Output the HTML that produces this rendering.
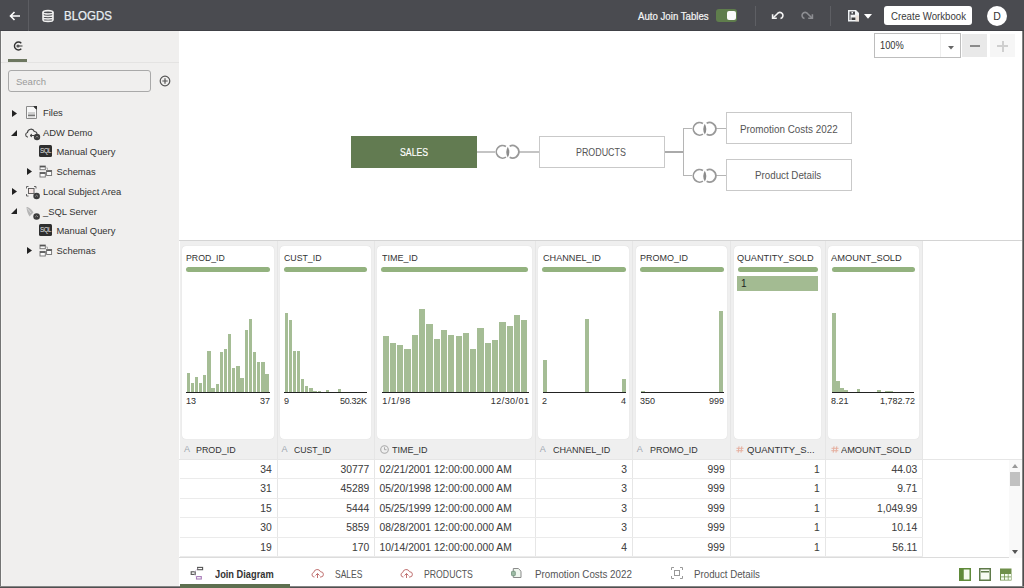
<!DOCTYPE html><html><head><meta charset="utf-8"><style>
*{margin:0;padding:0;box-sizing:border-box}
html,body{width:1024px;height:588px;overflow:hidden;background:#4a4b50;font-family:"Liberation Sans",sans-serif;color:#333}
.a{position:absolute}
.t{position:absolute;white-space:nowrap;line-height:10px}
.card{position:absolute;top:246px;height:193px;background:#fff;border-radius:4px;box-shadow:0 0 1px rgba(0,0,0,.15)}
.band{position:absolute;top:241px;height:218px;background:#efefef}
.ctitle{position:absolute;top:253px;letter-spacing:-0.2px;font-size:9.3px;color:#333;white-space:nowrap;line-height:10px}
.gbar{position:absolute;top:267px;height:5px;background:#93b27f;border-radius:3px}
.axis{position:absolute;top:392px;height:1px;background:#222}
.lab{position:absolute;top:396px;font-size:9px;color:#333;line-height:10px;white-space:nowrap}
.bar{position:absolute;background:#a5bd95}
.hdr{position:absolute;top:440px;height:19px;background:#efefef}
.hname{position:absolute;top:445px;font-size:9.3px;color:#333;line-height:10px;white-space:nowrap}
.row{position:absolute;height:1px;background:#ebebeb}
.vl{position:absolute;width:1px;background:#e4e4e4}
.cell{position:absolute;font-size:10.3px;color:#3c3c3c;line-height:10px;white-space:nowrap;text-align:right}
.tree{position:absolute;font-size:9.4px;color:#333;line-height:10px;white-space:nowrap}
.tab{position:absolute;top:570px;font-size:9.7px;color:#555;line-height:10px;white-space:nowrap}
.node{position:absolute;height:32px;border:1px solid #c9c9c9;background:#fff;font-size:9.6px;color:#444;text-align:center;line-height:32px;white-space:nowrap}
.ln{position:absolute;background:#b5b5b5}
svg{position:absolute;overflow:visible}
.cell,.ctitle,.hname,.lab{-webkit-text-stroke:0.05px currentColor}
</style></head><body>
<div class="a" style="left:0;top:0;width:1024px;height:31px;background:#4a4b50"></div>
<div class="a" style="left:0;top:30px;width:1024px;height:1px;background:#404146"></div>
<div class="a" style="left:1px;top:31px;width:178px;height:555px;background:#f0efee"></div>
<div class="a" style="left:0;top:31px;width:1px;height:557px;background:#747474"></div>
<div class="a" style="left:1px;top:31px;width:1px;height:555px;background:#f6f6f5"></div>
<div class="a" style="left:179px;top:31px;width:843px;height:209px;background:#fff"></div>
<div class="a" style="left:179px;top:240px;width:843px;height:1px;background:#d4d4d4"></div>
<div class="a" style="left:179px;top:241px;width:843px;height:317px;background:#fff"></div>
<div class="a" style="left:179px;top:558px;width:843px;height:28px;background:#fff"></div>
<div class="a" style="left:1022px;top:31px;width:1px;height:557px;background:#858585"></div>
<div class="a" style="left:1023px;top:31px;width:1px;height:557px;background:#4e4e4e"></div>
<div class="a" style="left:0;top:586px;width:1024px;height:1px;background:#868686"></div>
<div class="a" style="left:0;top:587px;width:1024px;height:1px;background:#505050"></div>
<div class="a" style="left:28px;top:0;width:1px;height:31px;background:#5c5d62"></div>
<svg style="left:9px;top:10px" width="12" height="12" viewBox="0 0 12 12"><path d="M1.5 6H11M5.5 2L1.5 6L5.5 10" stroke="#fff" stroke-width="1.6" fill="none"/></svg>
<svg style="left:42px;top:10px" width="12" height="12" viewBox="0 0 12 12"><g stroke="#f0f0f0" stroke-width="1.6" fill="none"><ellipse cx="6" cy="2.3" rx="5" ry="1.7"/><path d="M1 2.3V9.7C1 10.7 3.2 11.4 6 11.4S11 10.7 11 9.7V2.3M1 4.8C1 5.8 3.2 6.5 6 6.5S11 5.8 11 4.8M1 7.3C1 8.3 3.2 9 6 9S11 8.3 11 7.3"/></g></svg>
<div class="t" style="left:64px;top:10.2px;font-size:12.2px;line-height:12px;color:#e8eef3;transform:scaleX(0.945);transform-origin:0 0;-webkit-text-stroke:0.25px #e8eef3">BLOGDS</div>
<div class="t" style="left:638.30px;top:10.72px;font-size:10.61px;line-height:10.61px;color:#f6f6f6;transform:scaleX(0.910);transform-origin:0 0;-webkit-text-stroke:0.2px #f6f6f6">Auto Join Tables</div>
<div class="a" style="left:715.5px;top:9px;width:21.5px;height:12.5px;border-radius:3px;background:#5f7d4c"></div>
<div class="a" style="left:726.5px;top:10.5px;width:9.5px;height:9.5px;border-radius:2px;background:#fafafa"></div>
<div class="a" style="left:755px;top:6px;width:1px;height:20px;background:#5e5f64"></div>
<svg style="left:770px;top:10px" width="14" height="12" viewBox="0 0 14 12"><g stroke="#f4f4f4" stroke-width="1.6" fill="none"><path d="M2.6 4.3V8.3H6.8"/><path d="M3 8L7.3 3.7A3.1 3.1 0 1 1 10.5 8.5"/></g></svg>
<svg style="left:801px;top:10px;transform:scaleX(-1)" width="14" height="12" viewBox="0 0 14 12"><g stroke="#8d8e92" stroke-width="1.6" fill="none"><path d="M2.6 4.3V8.3H6.8"/><path d="M3 8L7.3 3.7A3.1 3.1 0 1 1 10.5 8.5"/></g></svg>
<div class="a" style="left:830px;top:6px;width:1px;height:20px;background:#5e5f64"></div>
<svg style="left:848px;top:9.5px" width="11" height="12" viewBox="0 0 11 12"><path d="M0 0H8L11 3V11.5H0Z" fill="#f0f3f5"/><rect x="1.5" y="1.5" width="5.5" height="3.2" fill="#4a4b50"/><rect x="3.5" y="2" width="1.5" height="1.5" fill="#f0f3f5"/><rect x="1.5" y="4.5" width="1" height="5.5" fill="#4a4b50"/><rect x="3.5" y="7.5" width="4" height="2.5" fill="#3a3b3c"/><rect x="7.5" y="5.5" width="3.5" height="6" fill="#e8d8cc" opacity=".6"/></svg>
<svg style="left:864px;top:13.8px" width="8" height="5" viewBox="0 0 8 5"><path d="M0 0H8L4 4.8Z" fill="#fff"/></svg>
<div class="a" style="left:884px;top:6px;width:88px;height:19px;border-radius:3px;background:#fff"></div>
<div class="t" style="left:890.90px;top:10.62px;font-size:10.61px;line-height:10.61px;color:#3a3a3a;transform:scaleX(0.911);transform-origin:0 0;">Create Workbook</div>
<div class="a" style="left:987px;top:6px;width:20px;height:20px;border-radius:50%;background:#fff"></div>
<div class="t" style="left:987px;top:11px;width:20px;text-align:center;font-size:10.5px;color:#333">D</div>
<div class="a" style="left:874px;top:33px;width:87px;height:25px;border:1px solid #bdbdbd;background:#fff"></div>
<div class="a" style="left:940px;top:34px;width:1px;height:23px;background:#eee"></div>
<div class="t" style="left:879.60px;top:41.39px;font-size:10.17px;line-height:10.17px;color:#333;transform:scaleX(0.915);transform-origin:0 0;">100%</div>
<svg style="left:947.5px;top:46px" width="6" height="4" viewBox="0 0 6 4"><path d="M0 0H6L3 3.5Z" fill="#666"/></svg>
<div class="a" style="left:962px;top:34px;width:25px;height:23px;background:#e9e9e9"></div>
<div class="a" style="left:970px;top:45px;width:10px;height:2px;background:#8a8a8a"></div>
<div class="a" style="left:990px;top:34px;width:25px;height:23px;background:#f6f6f6"></div>
<div class="a" style="left:997px;top:45px;width:11px;height:2px;background:#cfcfcf"></div>
<div class="a" style="left:1001.5px;top:40.5px;width:2px;height:11px;background:#cfcfcf"></div>
<svg style="left:13px;top:41px" width="10" height="10" viewBox="0 0 10 10"><path d="M8.3 2.2A4 4 0 1 0 8.3 7.8" stroke="#333" stroke-width="1.4" fill="none"/><circle cx="5" cy="5" r="1.6" fill="#555"/><path d="M5 5H9.5" stroke="#555" stroke-width="1.2"/></svg>
<div class="a" style="left:8px;top:59px;width:19px;height:3px;background:#6d7760"></div>
<div class="a" style="left:1px;top:62px;width:178px;height:1px;background:#e4e3e2"></div>
<div class="a" style="left:8px;top:70px;width:143px;height:22px;border:1px solid #a9a9a9;border-radius:3px;background:#f0efee"></div>
<div class="t" style="left:16px;top:77px;font-size:9.5px;color:#9a9a9a">Search</div>
<svg style="left:159px;top:75px" width="12" height="12" viewBox="0 0 12 12"><circle cx="6" cy="6" r="4.8" stroke="#555" stroke-width="1.2" fill="none"/><path d="M6 3.3V8.7M3.3 6H8.7" stroke="#555" stroke-width="1.2"/></svg>
<svg style="left:12px;top:110px" width="5" height="7" viewBox="0 0 5 7"><path d="M0 0L5 3.5L0 7Z" fill="#222"/></svg>
<svg style="left:26px;top:106px" width="11" height="13" viewBox="0 0 11 13"><path d="M0.5 0.5H7.5L10.5 3.5V12.5H0.5Z" stroke="#8a8a8a" stroke-width="1" fill="#f7f7f7"/><path d="M7 0H11V4Z" fill="#333"/><rect x="2" y="6.5" width="7" height="1" fill="#aaa"/><rect x="2" y="8.5" width="7" height="1.6" fill="#777"/><rect x="2" y="10.5" width="7" height="0.8" fill="#bbb"/></svg>
<div class="tree" style="left:43px;top:108px">Files</div>
<svg style="left:11px;top:130px" width="6" height="6" viewBox="0 0 6 6"><path d="M6 0V6H0Z" fill="#222"/></svg>
<svg style="left:25px;top:128px" width="16" height="12" viewBox="0 0 16 12"><path d="M3 9H2.5A2.3 2.3 0 0 1 2.5 4.5A3.5 3.5 0 0 1 9.3 3.5A2.6 2.6 0 0 1 12 6" stroke="#444" stroke-width="1.1" fill="none"/><path d="M5 7.5L7 6M5 7.5L7 9M5 7.5H9" stroke="#444" stroke-width="1" fill="none"/><circle cx="12" cy="9" r="3.2" fill="#3c3c3c"/><path d="M10.6 9.5L12 8.2L13.4 9.5" stroke="#999" stroke-width="0.9" fill="none"/></svg>
<div class="tree" style="left:43px;top:128px">ADW Demo</div>
<div class="a" style="left:39px;top:145px;width:12.5px;height:12px;background:#2e2e2e;border-radius:1.5px"></div><div class="t" style="left:39.6px;top:147px;font-size:6.6px;line-height:7px;color:#e6e6e6;letter-spacing:-0.5px;transform:scaleX(0.95);transform-origin:0 0">SQL</div>
<div class="tree" style="left:56.5px;top:147px">Manual Query</div>
<svg style="left:27px;top:168px" width="5" height="7" viewBox="0 0 5 7"><path d="M0 0L5 3.5L0 7Z" fill="#222"/></svg>
<svg style="left:39px;top:165px" width="13" height="13" viewBox="0 0 13 13"><g stroke="#707070" stroke-width="0.9" fill="#fafafa"><rect x="1" y="1" width="5.3" height="3.7"/><rect x="1" y="7.5" width="5.3" height="4.5"/><rect x="7.6" y="5.5" width="5" height="5"/></g><g fill="#555"><rect x="1" y="1" width="5.3" height="1.4"/><rect x="1" y="7.5" width="5.3" height="1.4"/><rect x="7.6" y="5.5" width="5" height="1.4"/></g><path d="M6.3 3H8.5V5.5" stroke="#999" stroke-width="0.7" fill="none"/></svg>
<div class="tree" style="left:56.5px;top:167px">Schemas</div>
<svg style="left:12px;top:188px" width="5" height="7" viewBox="0 0 5 7"><path d="M0 0L5 3.5L0 7Z" fill="#222"/></svg>
<svg style="left:26px;top:186px" width="15" height="14" viewBox="0 0 15 14"><g stroke="#555" stroke-width="0.9" fill="none"><path d="M0.5 2.5V0.5H2.5M8 0.5H10V2.5M0.5 8V10H2.5"/><rect x="2.5" y="2.5" width="5.5" height="5" fill="#f6e8e6"/></g><circle cx="10.6" cy="10" r="3.3" fill="#3c3c3c"/><path d="M9.2 10.5L10.6 9.2L12 10.5" stroke="#999" stroke-width="0.9" fill="none"/></svg>
<div class="tree" style="left:43px;top:186.5px">Local Subject Area</div>
<svg style="left:11px;top:208px" width="6" height="6" viewBox="0 0 6 6"><path d="M6 0V6H0Z" fill="#222"/></svg>
<svg style="left:26px;top:206px" width="15" height="14" viewBox="0 0 15 14"><path d="M0.5 1C3 1 6 3.5 7.5 6.5L5.5 8.5L3.5 10.5C2 8 0.5 4.5 0.5 1Z" fill="#b5b5b5"/><path d="M1.5 2.5L5 7" stroke="#e0e0e0" stroke-width="0.8"/><circle cx="10.6" cy="10.5" r="3.3" fill="#3c3c3c"/><path d="M9.2 11L10.6 9.7L12 11" stroke="#999" stroke-width="0.9" fill="none"/></svg>
<div class="tree" style="left:43px;top:207px">_SQL Server</div>
<div class="a" style="left:39px;top:224px;width:12.5px;height:12px;background:#2e2e2e;border-radius:1.5px"></div><div class="t" style="left:39.6px;top:226px;font-size:6.6px;line-height:7px;color:#e6e6e6;letter-spacing:-0.5px;transform:scaleX(0.95);transform-origin:0 0">SQL</div>
<div class="tree" style="left:56.5px;top:226px">Manual Query</div>
<svg style="left:27px;top:247px" width="5" height="7" viewBox="0 0 5 7"><path d="M0 0L5 3.5L0 7Z" fill="#222"/></svg>
<svg style="left:39px;top:244px" width="13" height="13" viewBox="0 0 13 13"><g stroke="#707070" stroke-width="0.9" fill="#fafafa"><rect x="1" y="1" width="5.3" height="3.7"/><rect x="1" y="7.5" width="5.3" height="4.5"/><rect x="7.6" y="5.5" width="5" height="5"/></g><g fill="#555"><rect x="1" y="1" width="5.3" height="1.4"/><rect x="1" y="7.5" width="5.3" height="1.4"/><rect x="7.6" y="5.5" width="5" height="1.4"/></g><path d="M6.3 3H8.5V5.5" stroke="#999" stroke-width="0.7" fill="none"/></svg>
<div class="tree" style="left:56.5px;top:246px">Schemas</div>
<div class="a" style="left:351px;top:136px;width:126px;height:32px;background:#627b51"></div>
<div class="t" style="left:399.50px;top:146.92px;font-size:10.61px;line-height:10.61px;color:#fff;transform:scaleX(0.824);transform-origin:0 0;-webkit-text-stroke:0.15px #fff">SALES</div>
<div class="ln" style="left:477px;top:151px;width:62px;height:1.5px;background:#c4c4c4"></div>
<svg style="left:494px;top:143px" width="26" height="18" viewBox="0 0 26 18"><rect x="1" y="1" width="24" height="16" fill="#fff"/><path d="M11.94 3.46A6.3 6.3 0 1 0 11.94 14.14" stroke="#999" stroke-width="1.7" fill="none"/><path d="M15.64 3.24A6.3 6.3 0 1 1 15.64 14.36" stroke="#999" stroke-width="1.7" fill="none"/><path d="M13.8 3.7Q16.9 9.1 13.8 14.5Q10.7 9.1 13.8 3.7Z" fill="#8c8c8c"/></svg>
<div class="node" style="left:539px;top:136px;width:126px"></div>
<div class="t" style="left:575.50px;top:147.96px;font-size:10.32px;line-height:10.32px;color:#555;transform:scaleX(0.862);transform-origin:0 0;">PRODUCTS</div>
<div class="ln" style="left:665px;top:151px;width:19px;height:1.5px;background:#aaa"></div>
<div class="ln" style="left:683px;top:128px;width:1px;height:48px"></div>
<div class="ln" style="left:683px;top:128px;width:43px;height:1px"></div>
<div class="ln" style="left:683px;top:175px;width:43px;height:1px"></div>
<svg style="left:691px;top:119.5px" width="26" height="18" viewBox="0 0 26 18"><rect x="1" y="1" width="24" height="16" fill="#fff"/><path d="M11.94 3.46A6.3 6.3 0 1 0 11.94 14.14" stroke="#999" stroke-width="1.7" fill="none"/><path d="M15.64 3.24A6.3 6.3 0 1 1 15.64 14.36" stroke="#999" stroke-width="1.7" fill="none"/><path d="M13.8 3.7Q16.9 9.1 13.8 14.5Q10.7 9.1 13.8 3.7Z" fill="#8c8c8c"/></svg>
<svg style="left:691px;top:166.5px" width="26" height="18" viewBox="0 0 26 18"><rect x="1" y="1" width="24" height="16" fill="#fff"/><path d="M11.94 3.46A6.3 6.3 0 1 0 11.94 14.14" stroke="#999" stroke-width="1.7" fill="none"/><path d="M15.64 3.24A6.3 6.3 0 1 1 15.64 14.36" stroke="#999" stroke-width="1.7" fill="none"/><path d="M13.8 3.7Q16.9 9.1 13.8 14.5Q10.7 9.1 13.8 3.7Z" fill="#8c8c8c"/></svg>
<div class="node" style="left:726px;top:112px;width:126px"></div>
<div class="t" style="left:739.60px;top:124.56px;font-size:10.32px;line-height:10.32px;color:#555;transform:scaleX(0.957);transform-origin:0 0;">Promotion Costs 2022</div>
<div class="node" style="left:726px;top:159px;width:126px"></div>
<div class="t" style="left:755.40px;top:171.36px;font-size:10.32px;line-height:10.32px;color:#555;transform:scaleX(0.947);transform-origin:0 0;">Product Details</div>
<div class="band" style="left:179.5px;width:97.5px"></div>
<div class="band" style="left:277px;width:97.5px"></div>
<div class="band" style="left:374.5px;width:160.70000000000005px"></div>
<div class="band" style="left:535.2px;width:97.09999999999991px"></div>
<div class="band" style="left:632.3px;width:97.70000000000005px"></div>
<div class="band" style="left:730px;width:95px"></div>
<div class="band" style="left:825px;width:97.5px"></div>
<div class="vl" style="left:276.5px;top:241px;height:317px;background:#e6e6e6"></div>
<div class="vl" style="left:374.0px;top:241px;height:317px;background:#e6e6e6"></div>
<div class="vl" style="left:534.7px;top:241px;height:317px;background:#e6e6e6"></div>
<div class="vl" style="left:631.8px;top:241px;height:317px;background:#e6e6e6"></div>
<div class="vl" style="left:729.5px;top:241px;height:317px;background:#e6e6e6"></div>
<div class="vl" style="left:824.5px;top:241px;height:317px;background:#e6e6e6"></div>
<div class="vl" style="left:922.0px;top:241px;height:317px;background:#e6e6e6"></div>
<div class="card" style="left:181.7px;width:92.30000000000001px"></div>
<div class="t" style="left:186.30px;top:253.43px;font-size:9.88px;line-height:9.88px;color:#333;transform:scaleX(0.885);transform-origin:0 0;">PROD_ID</div>
<div class="gbar" style="left:185.7px;width:84.60000000000001px"></div>
<div class="card" style="left:279.6px;width:91.19999999999999px"></div>
<div class="t" style="left:283.70px;top:253.43px;font-size:9.88px;line-height:9.88px;color:#333;transform:scaleX(0.887);transform-origin:0 0;">CUST_ID</div>
<div class="gbar" style="left:283.6px;width:83.49999999999999px"></div>
<div class="card" style="left:376.5px;width:155.5px"></div>
<div class="t" style="left:381.80px;top:253.43px;font-size:9.88px;line-height:9.88px;color:#333;transform:scaleX(0.916);transform-origin:0 0;">TIME_ID</div>
<div class="gbar" style="left:380.5px;width:147.8px"></div>
<div class="card" style="left:537.8px;width:91.70000000000005px"></div>
<div class="t" style="left:542.50px;top:253.43px;font-size:9.88px;line-height:9.88px;color:#333;transform:scaleX(0.923);transform-origin:0 0;">CHANNEL_ID</div>
<div class="gbar" style="left:541.8px;width:84.00000000000004px"></div>
<div class="card" style="left:635.5px;width:91.79999999999995px"></div>
<div class="t" style="left:640.20px;top:253.43px;font-size:9.88px;line-height:9.88px;color:#333;transform:scaleX(0.910);transform-origin:0 0;">PROMO_ID</div>
<div class="gbar" style="left:639.5px;width:84.09999999999995px"></div>
<div class="card" style="left:733.9px;width:87.60000000000002px"></div>
<div class="t" style="left:737.20px;top:253.43px;font-size:9.88px;line-height:9.88px;color:#333;transform:scaleX(0.930);transform-origin:0 0;">QUANTITY_SOLD</div>
<div class="gbar" style="left:737.9px;width:79.90000000000002px"></div>
<div class="card" style="left:827.7px;width:91.0px"></div>
<div class="t" style="left:831.20px;top:253.43px;font-size:9.88px;line-height:9.88px;color:#333;transform:scaleX(0.941);transform-origin:0 0;">AMOUNT_SOLD</div>
<div class="gbar" style="left:831.7px;width:83.3px"></div>
<div class="bar" style="left:186.50px;top:373.00px;width:3.35px;height:19.00px"></div><div class="bar" style="left:190.65px;top:383.20px;width:3.35px;height:8.80px"></div><div class="bar" style="left:194.80px;top:376.70px;width:3.35px;height:15.30px"></div><div class="bar" style="left:198.95px;top:383.20px;width:3.35px;height:8.80px"></div><div class="bar" style="left:203.10px;top:374.80px;width:3.35px;height:17.20px"></div><div class="bar" style="left:207.25px;top:350.50px;width:3.35px;height:41.50px"></div><div class="bar" style="left:211.40px;top:387.90px;width:3.35px;height:4.10px"></div><div class="bar" style="left:215.55px;top:384.10px;width:3.35px;height:7.90px"></div><div class="bar" style="left:219.70px;top:352.00px;width:3.35px;height:40.00px"></div><div class="bar" style="left:223.85px;top:349.00px;width:3.35px;height:43.00px"></div><div class="bar" style="left:228.00px;top:334.20px;width:3.35px;height:57.80px"></div><div class="bar" style="left:232.15px;top:367.70px;width:3.35px;height:24.30px"></div><div class="bar" style="left:236.30px;top:365.50px;width:3.35px;height:26.50px"></div><div class="bar" style="left:240.45px;top:378.20px;width:3.35px;height:13.80px"></div><div class="bar" style="left:244.60px;top:330.00px;width:3.35px;height:62.00px"></div><div class="bar" style="left:248.75px;top:318.70px;width:3.35px;height:73.30px"></div><div class="bar" style="left:252.90px;top:352.00px;width:3.35px;height:40.00px"></div><div class="bar" style="left:257.05px;top:362.00px;width:3.35px;height:30.00px"></div><div class="bar" style="left:261.20px;top:362.00px;width:3.35px;height:30.00px"></div><div class="bar" style="left:265.35px;top:374.40px;width:3.35px;height:17.60px"></div>
<div class="axis" style="left:186px;width:84px"></div>
<div class="lab" style="left:186px">13</div><div class="lab" style="left:230px;width:40px;text-align:right">37</div>
<div class="bar" style="left:284.50px;top:313.00px;width:3.33px;height:79.00px"></div><div class="bar" style="left:288.62px;top:320.00px;width:3.33px;height:72.00px"></div><div class="bar" style="left:292.75px;top:351.00px;width:3.33px;height:41.00px"></div><div class="bar" style="left:296.88px;top:351.00px;width:3.33px;height:41.00px"></div><div class="bar" style="left:301.00px;top:378.50px;width:3.33px;height:13.50px"></div><div class="bar" style="left:305.12px;top:385.60px;width:3.33px;height:6.40px"></div><div class="bar" style="left:309.25px;top:388.30px;width:3.33px;height:3.70px"></div><div class="bar" style="left:313.38px;top:390.70px;width:3.33px;height:1.30px"></div><div class="bar" style="left:317.50px;top:391.30px;width:3.33px;height:0.70px"></div><div class="bar" style="left:321.62px;top:391.50px;width:3.33px;height:0.50px"></div><div class="bar" style="left:325.75px;top:390.00px;width:3.33px;height:2.00px"></div><div class="bar" style="left:329.88px;top:391.50px;width:3.33px;height:0.50px"></div><div class="bar" style="left:334.00px;top:391.50px;width:3.33px;height:0.50px"></div><div class="bar" style="left:338.12px;top:389.40px;width:3.33px;height:2.60px"></div>
<div class="axis" style="left:284px;width:83px"></div>
<div class="lab" style="left:284px">9</div><div class="lab" style="left:316.7px;width:50px;text-align:right;letter-spacing:-0.3px">50.32K</div>
<div class="bar" style="left:382.50px;top:336.40px;width:6.30px;height:55.60px"></div><div class="bar" style="left:389.80px;top:342.60px;width:6.30px;height:49.40px"></div><div class="bar" style="left:397.10px;top:344.80px;width:6.30px;height:47.20px"></div><div class="bar" style="left:404.40px;top:348.60px;width:6.30px;height:43.40px"></div><div class="bar" style="left:411.70px;top:335.10px;width:6.30px;height:56.90px"></div><div class="bar" style="left:419.00px;top:308.90px;width:6.30px;height:83.10px"></div><div class="bar" style="left:426.30px;top:324.20px;width:6.30px;height:67.80px"></div><div class="bar" style="left:433.60px;top:338.80px;width:6.30px;height:53.20px"></div><div class="bar" style="left:440.90px;top:330.40px;width:6.30px;height:61.60px"></div><div class="bar" style="left:448.20px;top:335.10px;width:6.30px;height:56.90px"></div><div class="bar" style="left:455.50px;top:336.40px;width:6.30px;height:55.60px"></div><div class="bar" style="left:462.80px;top:333.00px;width:6.30px;height:59.00px"></div><div class="bar" style="left:470.10px;top:348.60px;width:6.30px;height:43.40px"></div><div class="bar" style="left:477.40px;top:328.00px;width:6.30px;height:64.00px"></div><div class="bar" style="left:484.70px;top:342.60px;width:6.30px;height:49.40px"></div><div class="bar" style="left:492.00px;top:340.10px;width:6.30px;height:51.90px"></div><div class="bar" style="left:499.30px;top:322.00px;width:6.30px;height:70.00px"></div><div class="bar" style="left:506.60px;top:325.70px;width:6.30px;height:66.30px"></div><div class="bar" style="left:513.90px;top:315.00px;width:6.30px;height:77.00px"></div><div class="bar" style="left:521.20px;top:319.70px;width:6.30px;height:72.30px"></div>
<div class="axis" style="left:382px;width:147px"></div>
<div class="lab" style="left:382.3px;letter-spacing:0.6px">1/1/98</div><div class="lab" style="left:469.45px;width:60px;text-align:right;letter-spacing:0.45px">12/30/01</div>
<div class="bar" style="left:543px;top:360.4px;width:4px;height:31.6px"></div>
<div class="bar" style="left:584.5px;top:319px;width:4px;height:73px"></div>
<div class="bar" style="left:622px;top:379.3px;width:4px;height:12.7px"></div>
<div class="axis" style="left:542.5px;width:83.5px"></div>
<div class="lab" style="left:542px">2</div><div class="lab" style="left:586px;width:40px;text-align:right">4</div>
<div class="bar" style="left:719px;top:311.3px;width:4px;height:80.7px"></div>
<div class="bar" style="left:641px;top:390.5px;width:4px;height:1.5px"></div>
<div class="axis" style="left:640.5px;width:83px"></div>
<div class="lab" style="left:640px">350</div><div class="lab" style="left:684px;width:40px;text-align:right">999</div>
<div class="a" style="left:737px;top:276px;width:81px;height:15px;background:#a3bb92"></div>
<div class="t" style="left:741px;top:278.5px;font-size:10px;color:#222">1</div>
<div class="bar" style="left:832.00px;top:312.50px;width:3.60px;height:79.50px"></div><div class="bar" style="left:836.10px;top:381.00px;width:3.60px;height:11.00px"></div><div class="bar" style="left:840.20px;top:387.70px;width:3.60px;height:4.30px"></div><div class="bar" style="left:844.30px;top:389.50px;width:3.60px;height:2.50px"></div><div class="bar" style="left:856.60px;top:389.00px;width:3.60px;height:3.00px"></div><div class="bar" style="left:877.10px;top:390.00px;width:3.60px;height:2.00px"></div><div class="bar" style="left:885.30px;top:391.20px;width:3.60px;height:0.80px"></div><div class="bar" style="left:889.40px;top:391.20px;width:3.60px;height:0.80px"></div>
<div class="axis" style="left:832px;width:82px"></div>
<div class="lab" style="left:831px">8.21</div><div class="lab" style="left:855px;width:60px;text-align:right">1,782.72</div>
<div class="a" style="left:179px;top:459px;width:843px;height:1px;background:#e6e6e6"></div>
<div class="t" style="left:184.0px;top:444px;font-size:9px;color:#9da6b0">A</div>
<div class="t" style="left:196.40px;top:444.53px;font-size:9.88px;line-height:9.88px;color:#333;transform:scaleX(0.901);transform-origin:0 0;">PROD_ID</div>
<div class="t" style="left:281.5px;top:444px;font-size:9px;color:#9da6b0">A</div>
<div class="t" style="left:294.00px;top:444.53px;font-size:9.88px;line-height:9.88px;color:#333;transform:scaleX(0.877);transform-origin:0 0;">CUST_ID</div>
<svg style="left:380.0px;top:445px" width="9" height="9" viewBox="0 0 9 9"><circle cx="4.5" cy="4.5" r="3.8" stroke="#aaa" stroke-width="1.1" fill="none"/><path d="M4.5 2.3V4.7H6.5" stroke="#aaa" stroke-width="1" fill="none"/></svg>
<div class="t" style="left:392.00px;top:444.53px;font-size:9.88px;line-height:9.88px;color:#333;transform:scaleX(0.913);transform-origin:0 0;">TIME_ID</div>
<div class="t" style="left:539.7px;top:444px;font-size:9px;color:#9da6b0">A</div>
<div class="t" style="left:552.70px;top:444.53px;font-size:9.88px;line-height:9.88px;color:#333;transform:scaleX(0.915);transform-origin:0 0;">CHANNEL_ID</div>
<div class="t" style="left:636.8px;top:444px;font-size:9px;color:#9da6b0">A</div>
<div class="t" style="left:650.30px;top:444.53px;font-size:9.88px;line-height:9.88px;color:#333;transform:scaleX(0.905);transform-origin:0 0;">PROMO_ID</div>
<svg style="left:736.0px;top:445.5px" width="8" height="7" viewBox="0 0 8 7"><path d="M3 0.3L2.2 6.7M5.8 0.3L5 6.7M0.5 2.3H7.5M0.3 4.7H7.3" stroke="#e6b0a0" stroke-width="1" fill="none"/></svg>
<div class="t" style="left:746.80px;top:444.53px;font-size:9.88px;line-height:9.88px;color:#333;transform:scaleX(0.962);transform-origin:0 0;">QUANTITY_S...</div>
<svg style="left:831.0px;top:445.5px" width="8" height="7" viewBox="0 0 8 7"><path d="M3 0.3L2.2 6.7M5.8 0.3L5 6.7M0.5 2.3H7.5M0.3 4.7H7.3" stroke="#e6b0a0" stroke-width="1" fill="none"/></svg>
<div class="t" style="left:840.50px;top:444.53px;font-size:9.88px;line-height:9.88px;color:#333;transform:scaleX(0.936);transform-origin:0 0;">AMOUNT_SOLD</div>
<div class="cell" style="left:179.5px;top:464.8px;width:92.2px">34</div>
<div class="cell" style="left:277px;top:464.8px;width:92.2px">30777</div>
<div class="cell" style="left:379.5px;top:464.8px;text-align:left">02/21/2001 12:00:00.000 AM</div>
<div class="cell" style="left:535.2px;top:464.8px;width:91.79999999999991px">3</div>
<div class="cell" style="left:632.3px;top:464.8px;width:92.40000000000005px">999</div>
<div class="cell" style="left:730px;top:464.8px;width:89.7px">1</div>
<div class="cell" style="left:825px;top:464.8px;width:92.2px">44.03</div>
<div class="row" style="left:180px;top:478px;width:742.5px"></div>
<div class="cell" style="left:179.5px;top:484.3px;width:92.2px">31</div>
<div class="cell" style="left:277px;top:484.3px;width:92.2px">45289</div>
<div class="cell" style="left:379.5px;top:484.3px;text-align:left">05/20/1998 12:00:00.000 AM</div>
<div class="cell" style="left:535.2px;top:484.3px;width:91.79999999999991px">3</div>
<div class="cell" style="left:632.3px;top:484.3px;width:92.40000000000005px">999</div>
<div class="cell" style="left:730px;top:484.3px;width:89.7px">1</div>
<div class="cell" style="left:825px;top:484.3px;width:92.2px">9.71</div>
<div class="row" style="left:180px;top:497.5px;width:742.5px"></div>
<div class="cell" style="left:179.5px;top:503.8px;width:92.2px">15</div>
<div class="cell" style="left:277px;top:503.8px;width:92.2px">5444</div>
<div class="cell" style="left:379.5px;top:503.8px;text-align:left">05/25/1999 12:00:00.000 AM</div>
<div class="cell" style="left:535.2px;top:503.8px;width:91.79999999999991px">3</div>
<div class="cell" style="left:632.3px;top:503.8px;width:92.40000000000005px">999</div>
<div class="cell" style="left:730px;top:503.8px;width:89.7px">1</div>
<div class="cell" style="left:825px;top:503.8px;width:92.2px">1,049.99</div>
<div class="row" style="left:180px;top:517px;width:742.5px"></div>
<div class="cell" style="left:179.5px;top:523.3px;width:92.2px">30</div>
<div class="cell" style="left:277px;top:523.3px;width:92.2px">5859</div>
<div class="cell" style="left:379.5px;top:523.3px;text-align:left">08/28/2001 12:00:00.000 AM</div>
<div class="cell" style="left:535.2px;top:523.3px;width:91.79999999999991px">3</div>
<div class="cell" style="left:632.3px;top:523.3px;width:92.40000000000005px">999</div>
<div class="cell" style="left:730px;top:523.3px;width:89.7px">1</div>
<div class="cell" style="left:825px;top:523.3px;width:92.2px">10.14</div>
<div class="row" style="left:180px;top:536.5px;width:742.5px"></div>
<div class="cell" style="left:179.5px;top:542.8px;width:92.2px">19</div>
<div class="cell" style="left:277px;top:542.8px;width:92.2px">170</div>
<div class="cell" style="left:379.5px;top:542.8px;text-align:left">10/14/2001 12:00:00.000 AM</div>
<div class="cell" style="left:535.2px;top:542.8px;width:91.79999999999991px">4</div>
<div class="cell" style="left:632.3px;top:542.8px;width:92.40000000000005px">999</div>
<div class="cell" style="left:730px;top:542.8px;width:89.7px">1</div>
<div class="cell" style="left:825px;top:542.8px;width:92.2px">56.11</div>
<div class="row" style="left:180px;top:556px;width:742.5px"></div>
<div class="a" style="left:179px;top:557px;width:843px;height:1px;background:#dcdcdc"></div>
<div class="a" style="left:1008.5px;top:459.5px;width:13px;height:98px;background:#f9f9f9"></div>
<svg style="left:1012px;top:464px" width="6" height="4" viewBox="0 0 6 4"><path d="M0 4L3 0L6 4Z" fill="#999"/></svg>
<div class="a" style="left:1010px;top:472px;width:10px;height:14px;background:#c1c1c1"></div>
<svg style="left:1012px;top:550px" width="6" height="4" viewBox="0 0 6 4"><path d="M0 0L3 4L6 0Z" fill="#555"/></svg>
<div class="a" style="left:180px;top:583.7px;width:109.5px;height:4.3px;background:#5d6f4f"></div>
<svg style="left:190px;top:566px" width="14" height="14" viewBox="0 0 14 14"><g stroke-width="1.1" fill="#fff"><rect x="7.6" y="1.4" width="5" height="2.3" stroke="#555"/><rect x="1.2" y="5.8" width="4" height="2.6" stroke="#555"/><rect x="6.5" y="10.6" width="4.8" height="2.4" stroke="#a77ab8"/></g><path d="M4.5 5.6L7.6 2.8M4.2 8.6L6.6 10.8" stroke="#d8c0e0" stroke-width="0.8"/></svg>
<div class="t" style="left:215.00px;top:569.79px;font-size:10.17px;line-height:10.17px;font-weight:bold;color:#333;transform:scaleX(0.911);transform-origin:0 0;">Join Diagram</div>
<svg style="left:311px;top:568px" width="13" height="11" viewBox="0 0 13 11"><path d="M3.5 9H3A2.3 2.3 0 0 1 2.7 4.5A3.6 3.6 0 0 1 9.6 3.8A2.6 2.6 0 0 1 10 9H9" stroke="#c07070" stroke-width="1" fill="none"/><path d="M6.5 10V5.5M4.5 7.5L6.5 5.5L8.5 7.5" stroke="#c07070" stroke-width="1" fill="none"/></svg>
<div class="t" style="left:335.20px;top:569.79px;font-size:10.17px;line-height:10.17px;color:#555;transform:scaleX(0.838);transform-origin:0 0;">SALES</div>
<svg style="left:400px;top:568px" width="13" height="11" viewBox="0 0 13 11"><path d="M3.5 9H3A2.3 2.3 0 0 1 2.7 4.5A3.6 3.6 0 0 1 9.6 3.8A2.6 2.6 0 0 1 10 9H9" stroke="#c07070" stroke-width="1" fill="none"/><path d="M6.5 10V5.5M4.5 7.5L6.5 5.5L8.5 7.5" stroke="#c07070" stroke-width="1" fill="none"/></svg>
<div class="t" style="left:424.10px;top:569.79px;font-size:10.17px;line-height:10.17px;color:#555;transform:scaleX(0.857);transform-origin:0 0;">PRODUCTS</div>
<svg style="left:510px;top:567px" width="12" height="12" viewBox="0 0 12 12"><path d="M3.3 1.5H8.3L11 4.2V10.5H3.3Z" stroke="#8a8a8a" stroke-width="1" fill="#eef6ee"/><rect x="1.5" y="4.3" width="3.8" height="4.4" rx="0.8" fill="#9cbba4" stroke="#6f8f78" stroke-width="0.8"/></svg>
<div class="t" style="left:534.80px;top:569.79px;font-size:10.17px;line-height:10.17px;color:#555;transform:scaleX(0.964);transform-origin:0 0;">Promotion Costs 2022</div>
<svg style="left:671px;top:567px" width="12" height="12" viewBox="0 0 12 12"><g stroke="#999" stroke-width="1" fill="none"><path d="M0.5 3V0.5H3M9 0.5H11.5V3M0.5 9V11.5H3M9 11.5H11.5V9"/><rect x="3.5" y="3.5" width="5" height="5"/></g></svg>
<div class="t" style="left:693.90px;top:569.79px;font-size:10.17px;line-height:10.17px;color:#555;transform:scaleX(0.957);transform-origin:0 0;">Product Details</div>
<svg style="left:959px;top:568px" width="54" height="13" viewBox="0 0 54 13"><rect x="0.75" y="0.75" width="10.5" height="11.5" stroke="#5f8a3a" stroke-width="1.5" fill="#f4fbef"/><rect x="0.75" y="0.75" width="4" height="11.5" fill="#5f8a3a"/><rect x="20.75" y="0.75" width="10.5" height="11.5" stroke="#5f7a4a" stroke-width="1.5" fill="#f8fbf4"/><rect x="22" y="3" width="8" height="1.5" fill="#5f7a4a"/><rect x="41" y="0.5" width="11.5" height="12" fill="#6f8f4a"/><g fill="#f4fbef"><rect x="42" y="6" width="3" height="2.5"/><rect x="45.8" y="6" width="3" height="2.5"/><rect x="49.5" y="6" width="2.5" height="2.5"/><rect x="42" y="9.3" width="3" height="2.5"/><rect x="45.8" y="9.3" width="3" height="2.5"/><rect x="49.5" y="9.3" width="2.5" height="2.5"/></g></svg>
</body></html>
